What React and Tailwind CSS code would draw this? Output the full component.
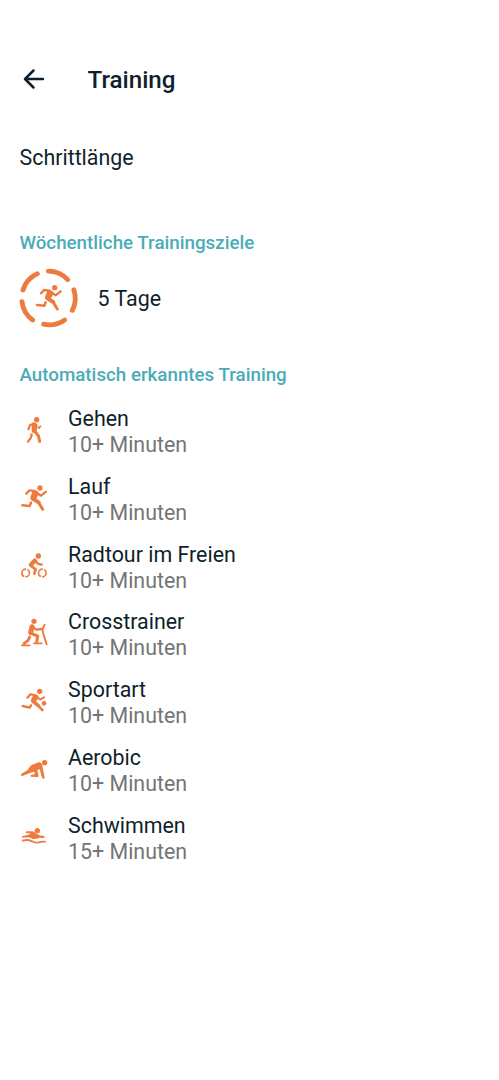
import React from 'react';

// Shared frame of the activity glyphs: limbs are round strokes, heads are discs
const Glyph = ({ children }) => (
  <svg
    viewBox="0 0 108 120"
    className="w-9 h-10 shrink-0"
    fill="none"
    stroke="#ee7b3e"
    strokeLinecap="round"
    strokeLinejoin="round"
  >
    {children}
  </svg>
);

const Head = ({ cx, cy, r = 8 }) => <circle cx={cx} cy={cy} r={r} fill="#ee7b3e" stroke="none" />;

const WalkIcon = () => (
  <Glyph>
    <Head cx="62" cy="29" r="8" />
    <path d="M54 41 L42 45 L37 58" strokeWidth="6.5" />
    <path d="M54 44 L58 47 L55 62 L54 62 Z" strokeWidth="14" fill="#ee7b3e" />
    <path d="M56 64 L67 77 L71 94" strokeWidth="9" />
    <path d="M47 73 L45 83 L36 95" strokeWidth="7" />
    <path d="M68 54 L73 49" strokeWidth="6" />
  </Glyph>
);

const RunShape = () => (
  <>
    <Head cx="72" cy="30" />
    <path d="M31 47 L40 37 L55 39" strokeWidth="7" />
    <path d="M56 43 L61 46 L54 61 L50 59 Z" strokeWidth="14" fill="#ee7b3e" />
    <path d="M63 45 L75 53 L90 41" strokeWidth="7" />
    <path d="M50 62 L68 73" strokeWidth="12" />
    <path d="M67 73 L80 94" strokeWidth="9" />
    <path d="M45 74 L41 84 L19 82" strokeWidth="7.5" />
  </>
);

const RunIcon = () => (
  <Glyph>
    <RunShape />
  </Glyph>
);

const BikeIcon = () => (
  <Glyph>
    <Head cx="67" cy="30" />
    <path d="M56 44 L45 56" strokeWidth="13" />
    <path d="M59 44 L65 53 L77 56" strokeWidth="7" />
    <path d="M44 59 L59 70 L55 83" strokeWidth="8" />
    <circle
      cx="29"
      cy="81"
      r="11.5"
      strokeWidth="4.8"
      strokeLinecap="butt"
      strokeDasharray="32.5 3.6"
      strokeDashoffset="-22"
      pathLength="72.2"
    />
    <circle
      cx="79"
      cy="81"
      r="11.5"
      strokeWidth="4.8"
      strokeLinecap="butt"
      strokeDasharray="32.5 3.6"
      strokeDashoffset="-22"
      pathLength="72.2"
    />
  </Glyph>
);

const CrosstrainerIcon = () => (
  <Glyph>
    <Head cx="54" cy="25" />
    <path d="M48 41 L44 59" strokeWidth="15" />
    <path d="M52 43 L61 50 L79 48" strokeWidth="7" />
    <path d="M45 61 L65 69 L62 88" strokeWidth="9" />
    <path d="M41 72 L36 82 L24 92" strokeWidth="8.5" />
    <path d="M18 97 H41 M54 91 H77" strokeWidth="5.5" />
    <path d="M86 35 L79 49 L82 62 L92 94" strokeWidth="5.8" />
  </Glyph>
);

const SportIcon = () => (
  <Glyph>
    <Head cx="71" cy="31" />
    <path d="M34 50 L43 40 L56 42" strokeWidth="6.5" />
    <path d="M57 46 L61 48 L54 60 L51 59 Z" strokeWidth="13" fill="#ee7b3e" />
    <path d="M62 49 L73 55 L84 49" strokeWidth="6.5" />
    <path d="M52 62 L67 74" strokeWidth="11" />
    <path d="M66 74 L79 87" strokeWidth="8" />
    <path d="M45 73 L41 80 L20 75" strokeWidth="7" />
    <Head cx="84" cy="67" r="7" />
  </Glyph>
);

const AerobicIcon = () => (
  <Glyph>
    <Head cx="86" cy="41" />
    <path
      d="M17 82 Q12 77 20 72 L35 63 L43 51 Q46 48 49 47 L68 40 Q76 39 78 46 L86 86 Q83 92 78 86 L71 60 L64 64 L68 80 Q67 86 61 84 L45 83 Q41 79 46 77 L57 76 L54 68 L44 71 Z"
      fill="#ee7b3e"
      stroke="none"
    />
  </Glyph>
);

const SwimIcon = () => (
  <Glyph>
    <Head cx="64" cy="41" r="8" />
    <path
      d="M31 43 L49 43 Q54 43 58 48 L70 55 L84 57 Q89 61 84 63 L71 62 Q60 67 51 66 L38 61 L21 62 Q15 59 20 57 L38 53 L44 49 L31 49 Q27 46 31 43 Z"
      fill="#ee7b3e"
      stroke="none"
    />
    <path d="M20 71 Q35 66 48 73 Q58 79 68 76 Q76 73 87 74" strokeWidth="5.5" />
  </Glyph>
);

const GoalRing = () => (
  <svg
    viewBox="0 0 240 225"
    className="w-20 h-[75px] shrink-0"
    fill="none"
    stroke="#ee7b3e"
    strokeLinecap="round"
    strokeLinejoin="round"
  >
    <path
      d="M115 33.500 A80 80 0 0 1 173 59 M191.500 89 A80 80 0 0 1 187 151 M164 180 A80 80 0 0 1 101 192.500 M68 180 A80 80 0 0 1 36 125 M39 90 A80 80 0 0 1 82 41"
      strokeWidth="14.5"
    />
    <g transform="translate(62 53)">
      <RunShape />
    </g>
  </svg>
);

const activities = [
  { name: 'Gehen', duration: '10+ Minuten', icon: WalkIcon },
  { name: 'Lauf', duration: '10+ Minuten', icon: RunIcon },
  { name: 'Radtour im Freien', duration: '10+ Minuten', icon: BikeIcon },
  { name: 'Crosstrainer', duration: '10+ Minuten', icon: CrosstrainerIcon },
  { name: 'Sportart', duration: '10+ Minuten', icon: SportIcon },
  { name: 'Aerobic', duration: '10+ Minuten', icon: AerobicIcon },
  { name: 'Schwimmen', duration: '15+ Minuten', icon: SwimIcon },
];

const SectionTitle = ({ children }) => (
  <h2 className="px-[19.5px] text-[18.75px] leading-6 font-medium text-[#4bacb8]">{children}</h2>
);

export default function App() {
  return (
    <div className="min-h-screen bg-white font-[Roboto,sans-serif] text-[#0f1f2b]">
      {/* App bar */}
      <header className="flex items-center pt-[55px] pl-[22px]">
        <button aria-label="Zurück" className="w-6 h-12 flex items-center">
          <svg
            viewBox="0 0 24 24"
            className="w-6 h-6"
            fill="none"
            stroke="currentColor"
            strokeWidth="2.5"
            strokeLinecap="round"
            strokeLinejoin="round"
          >
            <path d="M21 12 H3.500 M11.500 3.500 L3 12 L11.500 20.500" />
          </svg>
        </button>
        <h1 className="ml-[41.5px] pt-0.5 text-[24.2px] leading-8 font-medium">Training</h1>
      </header>

      <main>
        <button className="block mt-[42px] px-[19.5px] text-[21.4px] leading-[26px]">Schrittlänge</button>

        {/* Weekly goal */}
        <section className="mt-[60px]">
          <SectionTitle>Wöchentliche Trainingsziele</SectionTitle>
          <div className="flex items-center mt-[5px] pl-2.5">
            <GoalRing />
            <span className="ml-[7.5px] pt-[3px] text-[21.4px] leading-[26px]">5 Tage</span>
          </div>
        </section>

        {/* Detected activities */}
        <section className="mt-7">
          <SectionTitle>Automatisch erkanntes Training</SectionTitle>
          <ul className="mt-[9px]">
            {activities.map((item) => (
              <li key={item.name} className="flex items-center h-[67.85px] pl-4">
                <item.icon />
                <div className="ml-4 pt-1 text-[21.4px] leading-[26px]">
                  <div>{item.name}</div>
                  <div className="text-[#757575]">{item.duration}</div>
                </div>
              </li>
            ))}
          </ul>
        </section>
      </main>
    </div>
  );
}
